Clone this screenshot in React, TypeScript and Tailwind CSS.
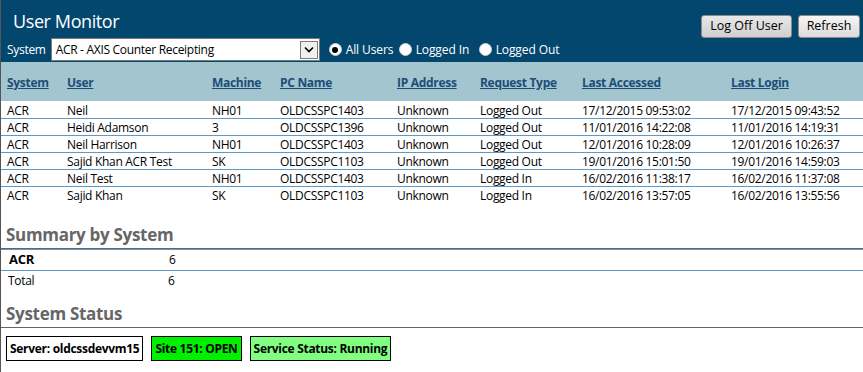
import React from "react";

const rows = [
  ["ACR", "Neil", "NH01", "OLDCSSPC1403", "Unknown", "Logged Out", "17/12/2015 09:53:02", "17/12/2015 09:43:52"],
  ["ACR", "Heidi Adamson", "3", "OLDCSSPC1396", "Unknown", "Logged Out", "11/01/2016 14:22:08", "11/01/2016 14:19:31"],
  ["ACR", "Neil Harrison", "NH01", "OLDCSSPC1403", "Unknown", "Logged Out", "12/01/2016 10:28:09", "12/01/2016 10:26:37"],
  ["ACR", "Sajid Khan ACR Test", "SK", "OLDCSSPC1103", "Unknown", "Logged Out", "19/01/2016 15:01:50", "19/01/2016 14:59:03"],
  ["ACR", "Neil Test", "NH01", "OLDCSSPC1403", "Unknown", "Logged In", "16/02/2016 11:38:17", "16/02/2016 11:37:08"],
  ["ACR", "Sajid Khan", "SK", "OLDCSSPC1103", "Unknown", "Logged In", "16/02/2016 13:57:05", "16/02/2016 13:55:56"],
];

const headers = ["System", "User", "Machine", "PC Name", "IP Address", "Request Type", "Last Accessed", "Last Login"];
const widths = ["w-[60px]", "w-[145px]", "w-[68px]", "w-[117px]", "w-[83px]", "w-[102px]", "w-[149px]", "flex-1"];

function Radio({ checked, label, w }: { checked?: boolean; label: string; w: string }) {
  return (
    <div className={`flex items-center ${w}`}>
      <span className="w-[13px] h-[13px] rounded-full bg-white flex items-center justify-center border border-[#ccc]">
        {checked && <span className="w-[6px] h-[6px] rounded-full bg-black" />}
      </span>
      <span className="ml-[4px] text-white text-[12px] tracking-[-0.1px]">{label}</span>
    </div>
  );
}

export default function App() {
  return (
    <div
      className="w-[863px] h-[372px] bg-white border-l border-[#555] overflow-hidden text-black"
      style={{ fontFamily: '"Open Sans", "Noto Sans", sans-serif' }}
    >
      <div className="bg-[#03476f] h-[62px]">
        <div className="flex justify-between items-start h-[37px]">
          <div className="pl-[12px] pt-[9px] text-[18px] leading-[24px] text-white tracking-[-0.4px]">User Monitor</div>
          <div className="flex gap-[6px] mt-[15px] mr-[3px]">
            <button className="h-[23px] w-[91px] rounded-[3px] border border-[#8a8a8a] bg-gradient-to-b from-[#e8e8e8] to-[#cfcfcf] text-[12.5px] text-black leading-none">
              Log Off User
            </button>
            <button className="h-[23px] w-[62px] rounded-[3px] border border-[#8a8a8a] bg-gradient-to-b from-[#f6f6f6] to-[#dcdcdc] text-[12.5px] text-black leading-none">
              Refresh
            </button>
          </div>
        </div>
        <div className="flex items-center h-[25px] pl-[6px] tracking-[-0.3px]">
          <span className="text-white text-[12px] mr-[5px]">System</span>
          <div className="w-[269px] h-[23px] bg-white border border-[#7a7a7a] flex items-center justify-between pl-[4px] pr-[1px]">
            <span className="text-[12px]">ACR - AXIS Counter Receipting</span>
            <span className="w-[18px] h-[18px] border border-[#7a7a7a] bg-[#f0f0f0] flex items-center justify-center">
              <svg width="10" height="7" viewBox="0 0 10 7">
                <path d="M1 1.5 L5 5.5 L9 1.5" stroke="#000" strokeWidth="1.6" fill="none" />
              </svg>
            </span>
          </div>
          <div className="flex items-center ml-[9px]">
            <Radio checked label="All Users" w="w-[70px]" />
            <Radio label="Logged In" w="w-[80px]" />
            <Radio label="Logged Out" w="w-[90px]" />
          </div>
        </div>
      </div>

      <div className="bg-[#a3c5cf] h-[39px] flex items-center pt-[3px] pl-[6px] tracking-[-0.3px]">
        {headers.map((h, i) => (
          <div key={h} className={`${widths[i]} text-[12px] font-bold text-[#1c4d77] underline`}>
            {h}
          </div>
        ))}
      </div>
      {rows.map((r, ri) => (
        <div
          key={ri}
          className={`flex items-center h-[17px] pt-[2px] pl-[6px] tracking-[-0.3px] ${ri > 0 ? "border-t border-[#5a9bc8]" : ""}`}
        >
          {r.map((c, i) => (
            <div key={i} className={`${widths[i]} text-[12px] leading-[14px] whitespace-nowrap`}>
              {c}
            </div>
          ))}
        </div>
      ))}

      <div className="mt-[19px] pl-[5px] text-[17px] leading-[26px] font-bold text-[#666] tracking-[-0.3px] border-b border-[#666]">
        Summary by System
      </div>
      <div className="h-[22px] flex items-center pl-[8px] border-t border-[#5a9bc8] border-b tracking-[-0.3px]">
        <span className="w-[160px] text-[13px] font-bold">ACR</span>
        <span className="text-[12px]">6</span>
      </div>
      <div className="h-[19px] flex items-center pl-[7px] tracking-[-0.3px]">
        <span className="w-[160px] text-[12px]">Total</span>
        <span className="text-[12px]">6</span>
      </div>

      <div className="mt-[10px] pl-[5px] text-[17px] leading-[27px] font-bold text-[#666] tracking-[-0.3px] border-b border-[#666]">
        System Status
      </div>
      <div className="flex gap-[8px] pl-[5px] mt-[8px] tracking-[-0.3px]">
        <div className="h-[25px] px-[3px] border border-black bg-white flex items-center text-[12px] font-bold">Server: oldcssdevvm15</div>
        <div className="h-[25px] px-[3px] border border-black bg-[#00f000] flex items-center text-[12px] font-bold">Site 151: OPEN</div>
        <div className="h-[25px] px-[3px] border border-black bg-[#80ff80] flex items-center text-[12px] font-bold">Service Status: Running</div>
      </div>
    </div>
  );
}
